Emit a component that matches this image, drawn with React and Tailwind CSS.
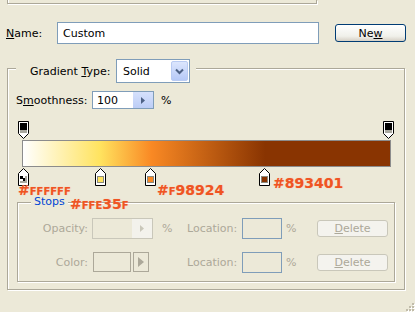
import React from "react";

const topStops = [0, 100];
const colorStops = [
  { pct: 0, color: null },
  { pct: 21.2, color: "#ffe35f" },
  { pct: 34.9, color: "#f98924" },
  { pct: 66.1, color: "#893401" },
];

function TopStop({ pct }) {
  return (
    <svg
      className="absolute top-0"
      style={{ left: Math.round(pct * 3.65) - 5 }}
      width="11"
      height="18"
      viewBox="0 0 11 18"
    >
      <path d="M0.5 0.5 H10.5 V12.5 L5.5 17.5 L0.5 12.5 Z" fill="#fff" stroke="#000" />
      <rect x="2" y="2" width="7" height="7" fill="#000" />
      <rect x="2" y="9" width="7" height="3" fill="#a9a89f" />
    </svg>
  );
}

function ColorStop({ pct, color }) {
  return (
    <svg
      className="absolute top-0"
      style={{ left: Math.round(pct * 3.65) - 5 }}
      width="11"
      height="18"
      viewBox="0 0 11 18"
    >
      <path d="M5.5 0.5 L10.5 5.5 V17.5 H0.5 V5.5 Z" fill="#fff" stroke="#000" />
      {color ? (
        <rect x="2.5" y="8.5" width="6" height="6" fill={color} stroke="#8a8a80" />
      ) : (
        <>
          <rect x="2" y="8" width="7" height="7" fill="#a9a89f" />
          <rect x="2" y="8" width="5" height="5" fill="#fff" />
          <rect x="2" y="8" width="3" height="3" fill="#000" />
          <rect x="5" y="10" width="2" height="3" fill="#000" />
        </>
      )}
    </svg>
  );
}

function DeleteButton() {
  return (
    <div className="w-[71px] h-[17px] rounded-[3px] border border-[#c9c7ba] bg-[#f4f3ee] flex items-center justify-center text-[#aca899]">
      <span>
        <u>D</u>elete
      </span>
    </div>
  );
}

function Hex({ className, children }) {
  return (
    <span
      className={
        "absolute leading-none text-[14px] font-bold text-[#ef5423] [font-variant:small-caps] [text-shadow:0_0_1px_#f9a98a] " +
        className
      }
    >
      {children}
    </span>
  );
}

export default function App() {
  return (
    <div className="relative w-[415px] h-[312px] overflow-hidden bg-[#ece9d8] text-[11px] leading-[13px] text-black font-['DejaVu_Sans',sans-serif]">
      {/* tail of the box above */}
      <div className="ml-[7px] w-[310px] h-[4px] border-x border-b border-[#aca899] shadow-[inset_1px_0_0_#fff,1px_1px_0_#fff]" />

      {/* Name row */}
      <div className="mt-[18px] flex items-center h-[22px]">
        <span className="ml-[6px] w-[51px]">
          <u>N</u>ame:
        </span>
        <div className="w-[262px] h-[22px] border border-[#7f9db9] bg-white pl-[5px] flex items-center">
          Custom
        </div>
        <div className="ml-[16px] w-[71px] h-[18px] rounded-[3px] border border-[#003c74] bg-[linear-gradient(#ffffff,#f0f0ea_70%,#d6d0c5)] flex items-center justify-center">
          <span>
            Ne<u>w</u>
          </span>
        </div>
      </div>

      {/* Gradient group */}
      <div className="mt-[24px] ml-[7px] w-[398px] h-[222px] border border-[#aca899] shadow-[inset_1px_1px_0_#fff,1px_1px_0_#fff]">
        <div className="-mt-[10px] ml-[8px] w-fit pl-[14px] pr-[6px] h-[24px] flex items-center bg-[#ece9d8]">
          <span className="w-[86px]">
            Gradient <u>T</u>ype:
          </span>
          <div className="w-[74px] h-[24px] border border-[#7f9db9] bg-white flex items-center justify-between">
            <span className="pl-[6px]">Solid</span>
            <div className="w-[17px] h-[20px] mr-[1px] rounded-[2px] bg-[linear-gradient(#dce6fd,#b6c9f7)] border border-[#b9cbf3] flex items-center justify-center">
              <svg width="9" height="7" viewBox="0 0 9 7">
                <path d="M1 1.5 L4.5 5 L8 1.5" fill="none" stroke="#4d6185" strokeWidth="2" />
              </svg>
            </div>
          </div>
        </div>

        {/* Smoothness */}
        <div className="mt-[8px] ml-[8px] flex items-center h-[18px]">
          <span className="w-[76px]">
            S<u>m</u>oothness:
          </span>
          <div className="w-[62px] h-[18px] border border-[#7f9db9] bg-white flex items-center justify-between">
            <span className="pl-[4px]">100</span>
            <div className="w-[20px] h-[16px] bg-[linear-gradient(#d6e1fc,#bccdf6)] flex items-center justify-center">
              <svg width="4" height="7" viewBox="0 0 4 7">
                <path d="M0 0 L4 3.5 L0 7 Z" fill="#4d6185" />
              </svg>
            </div>
          </div>
          <span className="ml-[7px]">%</span>
        </div>

        {/* opacity stops */}
        <div className="relative mt-[12px] ml-[15px] w-[366px] h-[18px]">
          {topStops.map((p) => (
            <TopStop key={p} pct={p} />
          ))}
        </div>

        {/* gradient bar */}
        <div className="mt-[1px] ml-[14px] w-[369px] h-[27px] border border-[#8c8c8c] bg-[linear-gradient(to_right,#ffffff_0%,#ffe35f_21%,#f98924_35%,#893401_66%,#893401_100%)]" />

        {/* color stops */}
        <div className="relative mt-[1px] ml-[15px] w-[366px] h-[18px]">
          {colorStops.map((s) => (
            <ColorStop key={s.pct} pct={s.pct} color={s.color} />
          ))}
        </div>

        {/* Stops group */}
        <div className="mt-[16px] ml-[9px] w-[378px] h-[80px] border border-[#aca899] shadow-[inset_1px_1px_0_#fff,1px_1px_0_#fff]">
          <div className="-mt-[8px] ml-[13px] w-fit px-[3px] h-[14px] bg-[#ece9d8] text-[#0046d5]">
            Stops
          </div>

          {/* Opacity row */}
          <div className="mt-[8px] flex items-center h-[22px] text-[#aca899]">
            <span className="w-[70px] text-right">Opacity:</span>
            <div className="ml-[4px] w-[95px] flex items-center">
              <div className="w-[61px] h-[21px] border border-[#c9c7ba] flex justify-end">
                <div className="w-[20px] h-full bg-[#f3f2ec] flex items-center justify-center">
                  <svg width="4" height="7" viewBox="0 0 4 7">
                    <path d="M0 0 L4 3.5 L0 7 Z" fill="#c9c7ba" />
                  </svg>
                </div>
              </div>
              <span className="ml-[9px]">%</span>
            </div>
            <span className="w-[55px]">Location:</span>
            <div className="w-[40px] h-[21px] border border-[#7f9db9]" />
            <span className="w-[35px] pl-[4px]">%</span>
            <DeleteButton />
          </div>

          {/* Color row */}
          <div className="mt-[12px] flex items-center h-[22px] text-[#aca899]">
            <span className="w-[70px] text-right">Color:</span>
            <div className="ml-[4px] w-[95px] flex items-center">
              <div className="ml-[1px] w-[38px] h-[20px] border border-[#aca899]" />
              <div className="ml-[2px] w-[16px] h-[20px] border border-[#aca899] flex items-center justify-center">
                <svg width="6" height="10" viewBox="0 0 6 10">
                  <path d="M0 0 L6 5 L0 10 Z" fill="#aca899" />
                </svg>
              </div>
            </div>
            <span className="w-[55px]">Location:</span>
            <div className="w-[40px] h-[21px] border border-[#7f9db9]" />
            <span className="w-[35px] pl-[4px]">%</span>
            <DeleteButton />
          </div>
        </div>
      </div>

      {/* hex annotations over the stops */}
      <Hex className="left-[18px] top-[183px]">#ffffff</Hex>
      <Hex className="left-[157px] top-[183px]">#f98924</Hex>
      <Hex className="left-[273px] top-[176px]">#893401</Hex>
      <Hex className="left-[70px] top-[197px]">#ffe35f</Hex>

      {/* size grip */}
      <svg className="absolute right-0 bottom-0" width="12" height="12" viewBox="0 0 12 12">
        {[
          [9, 3],
          [6, 6],
          [9, 6],
          [3, 9],
          [6, 9],
          [9, 9],
        ].map(([x, y]) => (
          <g key={x + "-" + y}>
            <rect x={x + 1} y={y + 1} width="2" height="2" fill="#fff" />
            <rect x={x} y={y} width="2" height="2" fill="#c1bcaa" />
          </g>
        ))}
      </svg>
    </div>
  );
}
